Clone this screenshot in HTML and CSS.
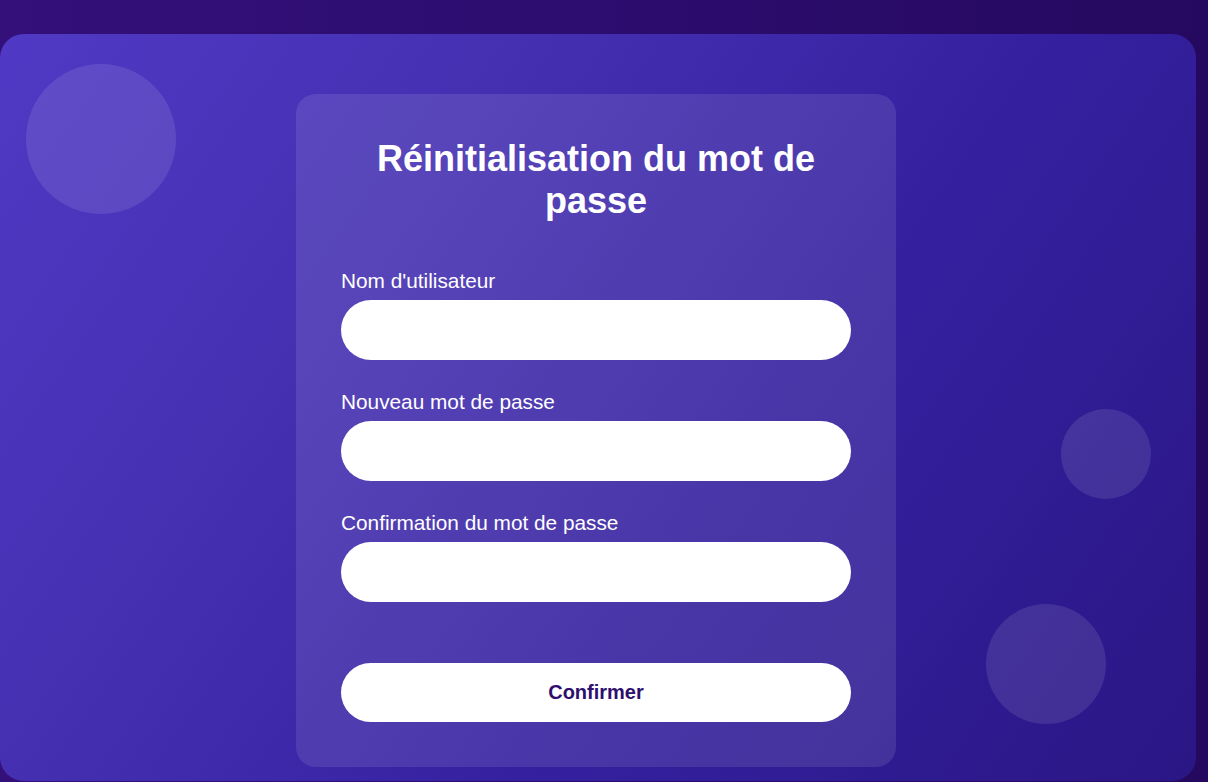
FILE: index.html
```html
<!DOCTYPE html>
<html lang="fr">
<head>
<meta charset="utf-8">
<title>Réinitialisation du mot de passe</title>
<link rel="stylesheet" href="styles.css">
</head>
<body>
<div class="stage">
  <div class="bubble bubble-a"></div>
  <div class="bubble bubble-b"></div>
  <div class="bubble bubble-c"></div>
  <form class="panel">
    <h1 class="panel-title">Réinitialisation du mot de passe</h1>
    <div class="field">
      <label class="field-label" for="user">Nom d'utilisateur</label>
      <input class="field-input" id="user" type="text">
    </div>
    <div class="field">
      <label class="field-label" for="pw">Nouveau mot de passe</label>
      <input class="field-input" id="pw" type="password">
    </div>
    <div class="field">
      <label class="field-label" for="pw2">Confirmation du mot de passe</label>
      <input class="field-input" id="pw2" type="password">
    </div>
    <button class="submit" type="button">Confirmer</button>
  </form>
</div>
</body>
</html>
```
FILE: styles.css
```css
* { box-sizing: border-box; }

html, body {
  margin: 0;
  height: 100%;
}

body {
  background: linear-gradient(90deg, #33107a 0%, #2b0c6c 60%, #25095f 100%);
  font-family: "Liberation Sans", Arial, sans-serif;
  overflow: hidden;
  padding-top: 34px;
}

.stage {
  position: relative;
  width: 1196px;
  height: 747px;
  border-radius: 24px;
  background: linear-gradient(125deg, #5039c4 0%, #4530b2 30%, #3521a0 60%, #2a1684 100%);
  display: flex;
  justify-content: center;
  align-items: flex-start;
  padding-top: 60px;
  padding-right: 4px;
  overflow: hidden;
}

.bubble {
  position: absolute;
  border-radius: 50%;
  background: rgba(255, 255, 255, 0.1);
}
.bubble-a { left: 26px; top: 30px; width: 150px; height: 150px; }
.bubble-b { left: 1061px; top: 375px; width: 90px; height: 90px; }
.bubble-c { left: 986px; top: 570px; width: 120px; height: 120px; }

.panel {
  position: relative;
  width: 600px;
  background: rgba(255, 255, 255, 0.1);
  border-radius: 20px;
  padding: 44px 45px 45px;
  display: flex;
  flex-direction: column;
}

.panel-title {
  margin: 0 0 47px;
  color: #ffffff;
  font-size: 36px;
  font-weight: bold;
  text-align: center;
  line-height: normal;
}

.field {
  display: flex;
  flex-direction: column;
  gap: 7px;
  margin-bottom: 30px;
}

.field-label {
  color: #ffffff;
  font-size: 20.8px;
  line-height: 24px;
}

.field-input {
  height: 60px;
  border: none;
  border-radius: 30px;
  background: #ffffff;
  padding: 0 24px;
  font-size: 18px;
  font-family: inherit;
  outline: none;
}

.submit {
  margin-top: 31px;
  height: 59px;
  border: none;
  border-radius: 30px;
  background: #ffffff;
  color: #2e0f6e;
  font-family: inherit;
  font-size: 20px;
  font-weight: bold;
  cursor: pointer;
}
```
